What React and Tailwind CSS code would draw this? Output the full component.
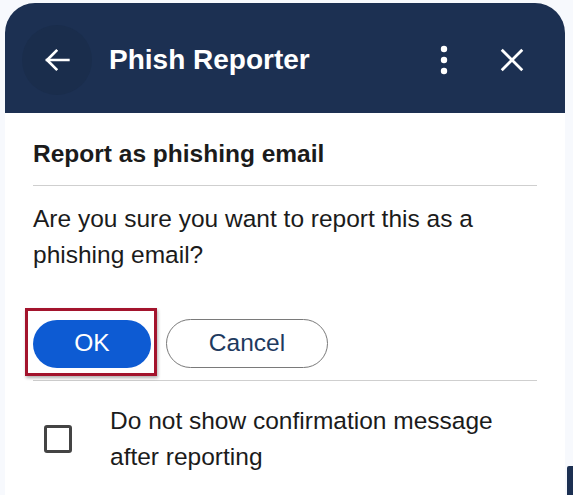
export default function App() {
  const font = { fontFamily: '"Liberation Sans", Arial, sans-serif' };
  return (
    <div className="relative w-[573px] h-[495px] overflow-hidden bg-[#f7f9fd]" style={font}>
      <div className="ml-[5px] mt-[3px] w-[560px] h-[492px] rounded-t-[30px] bg-white overflow-hidden">
        {/* Header */}
        <div className="h-[110px] bg-[#1c3052] flex items-center pt-[4px]">
          <div className="ml-[17px] w-[70px] h-[70px] rounded-full bg-[#1a2d4c] flex items-center justify-center">
            <svg width="34" height="34" viewBox="0 0 24 24" fill="none" stroke="white" strokeWidth="1.9" strokeLinecap="square">
              <path d="M20 12H5" />
              <path d="M11.5 5.5L5 12l6.5 6.5" />
            </svg>
          </div>
          <div className="ml-[17px] text-white font-bold text-[28px] leading-none">Phish Reporter</div>
          <div className="ml-auto mr-[39px] flex items-center">
            <svg width="8" height="30" viewBox="0 0 8 30" fill="white">
              <circle cx="4" cy="4" r="3.2" />
              <circle cx="4" cy="15" r="3.2" />
              <circle cx="4" cy="26" r="3.2" />
            </svg>
            <svg className="ml-[50px]" width="28" height="28" viewBox="0 0 30 30" fill="none" stroke="white" strokeWidth="3">
              <path d="M4 4L26 26M26 4L4 26" />
            </svg>
          </div>
        </div>
        {/* Content */}
        <div className="px-[28px]">
          <div className="pt-[23px] pb-[13px] text-[24.5px] leading-[36px] font-bold text-[#1b1b1b]">
            Report as phishing email
          </div>
          <div className="h-px bg-[#cfcfcf]" />
          <div className="mt-[15px] text-[24.5px] leading-[36px] text-[#1b1b1b]">
            Are you sure you want to report this as a phishing email?
          </div>
          <div className="mt-[46px] flex items-center">
            <div className="relative">
              <button className="w-[118px] h-[48px] rounded-full bg-[#0d5bd3] text-white text-[24.5px] leading-none">
                OK
              </button>
              <span className="absolute left-[-8px] right-[-6px] top-[-12px] bottom-[-8px] border-[3px] border-[#a3142d] shadow-[1px_2px_3px_rgba(0,0,0,0.3)] pointer-events-none" />
            </div>
            <button className="ml-[15px] w-[162px] h-[49px] rounded-full border border-[#7a7a7a] bg-white text-[#1e3a5f] text-[24.5px] leading-none">
              Cancel
            </button>
          </div>
          <div className="mt-[12px] h-px bg-[#cfcfcf]" />
          <div className="mt-[22px] flex items-start">
            <div className="ml-[11px] mt-[22px] w-[28px] h-[28px] shrink-0 rounded-[3px] border-[3px] border-[#444444]" />
            <div className="ml-[38px] w-[400px] text-[24.5px] leading-[36px] text-[#1b1b1b]">
              Do not show confirmation message after reporting
            </div>
          </div>
        </div>
      </div>
      <div className="absolute left-[567px] top-[466px] w-[6px] h-[29px] bg-[#1c3052] rounded-tl-[2px]" />
    </div>
  );
}
